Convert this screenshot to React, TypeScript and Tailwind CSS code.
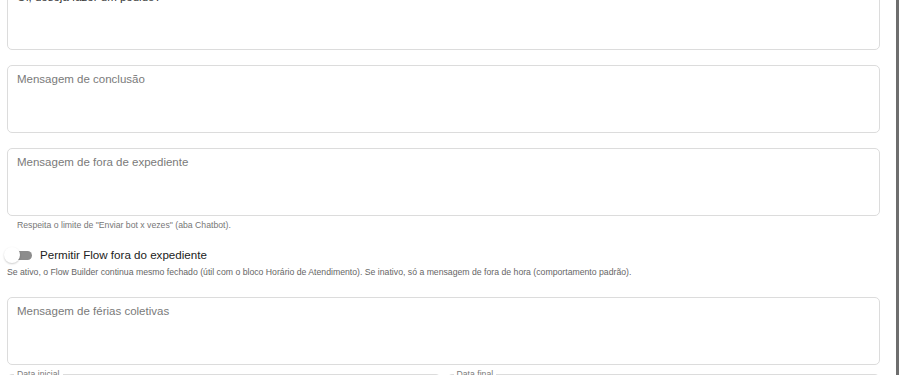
import React from 'react'

function MsgBox({ label, value }: { label?: string; value?: string }) {
  return (
    <div className="h-[68px] w-[873px] rounded-[5px] border border-[#dcdcdc] bg-white px-[9px] pt-[5px]">
      {value ? (
        <div className="pt-[1px] text-[11.5px] leading-[16px] text-[#333]">{value}</div>
      ) : (
        <div className="text-[11.5px] leading-[16px] text-[#7a7a7a]">{label}</div>
      )}
    </div>
  )
}

function DateField({ label }: { label: string }) {
  return (
    <div className="relative h-[40px] flex-1 rounded-[5px] border border-[#dcdcdc]">
      <span className="absolute -top-[7px] left-[6px] bg-white px-[3px] text-[8.7px] leading-[12px] text-[#7a7a7a]">
        {label}
      </span>
    </div>
  )
}

export default function App() {
  return (
    <div
      className="relative h-[375px] w-[900px] overflow-hidden bg-white"
      style={{ fontFamily: '"Liberation Sans", Arial, sans-serif' }}
    >
      <div className="-mt-[18px] flex flex-col pl-[7px]">
        <MsgBox value="Oi, deseja fazer um pedido?" />
        <div className="mt-[15px]">
          <MsgBox label="Mensagem de conclusão" />
        </div>
        <div className="mt-[15px]">
          <MsgBox label="Mensagem de fora de expediente" />
        </div>
        <div className="mt-[3px] pl-[10px] text-[8.7px] leading-[12px] text-[#777]">
          Respeita o limite de "Enviar bot x vezes" (aba Chatbot).
        </div>

        <div className="mt-[16px] flex h-[16px] items-center">
          <div className="relative h-[16px] w-[28px]">
            <div className="absolute left-[3px] top-[3.5px] h-[9px] w-[22px] rounded-full bg-[#8c8c8c]" />
            <div className="absolute -left-[3px] top-0 h-[16px] w-[16px] rounded-full bg-white shadow-[0_1px_2px_rgba(0,0,0,0.2)]" />
          </div>
          <span className="ml-[5px] text-[11.6px] leading-[16px] text-[#222]">Permitir Flow fora do expediente</span>
        </div>
        <div className="mt-[3px] text-[8.7px] leading-[12px] text-[#666]">
          Se ativo, o Flow Builder continua mesmo fechado (útil com o bloco Horário de Atendimento). Se inativo, só a mensagem de fora de hora (comportamento padrão).
        </div>

        <div className="mt-[19px]">
          <MsgBox label="Mensagem de férias coletivas" />
        </div>

        <div className="mt-[9px] flex w-[873px] gap-[6px]">
          <DateField label="Data inicial" />
          <DateField label="Data final" />
        </div>
      </div>

      <div className="absolute right-[1px] top-0 h-full w-[3px] bg-[#6e6e6e]" />
    </div>
  )
}
